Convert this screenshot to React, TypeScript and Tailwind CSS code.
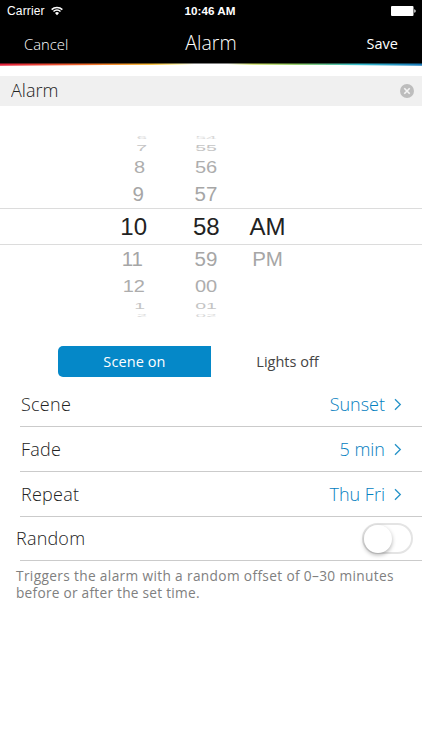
import { useState } from 'react';
import clsx from 'clsx';

interface WheelRow {
  hour: string;
  minute: string;
  period?: string;
  row: string;
  text: string;
  hourShift: string;
}

const wheelRows: WheelRow[] = [
  { hour: '6', minute: '54', row: 'h-[10px]', text: 'text-[19px] scale-y-[0.16] text-[#d8d8d8]', hourShift: 'pr-0' },
  { hour: '7', minute: '55', row: 'h-[11px]', text: 'text-[19.5px] scale-y-[0.47] text-[#c4c4c4]', hourShift: 'pr-0' },
  { hour: '8', minute: '56', row: 'h-[28px]', text: 'text-[20px] scale-y-[0.8] text-[#adadad]', hourShift: 'pr-[2px]' },
  { hour: '9', minute: '57', row: 'h-[27px]', text: 'text-[20.5px] text-[#a6a6a6]', hourShift: 'pr-[3px]' },
  { hour: '10', minute: '58', period: 'AM', row: 'h-[37px] border-y border-[#dcdcdc]', text: 'text-[24px] text-[#222]', hourShift: 'pr-0' },
  { hour: '11', minute: '59', period: 'PM', row: 'h-[28px]', text: 'text-[20.5px] text-[#a6a6a6]', hourShift: 'pr-[4px]' },
  { hour: '12', minute: '00', row: 'h-[26px]', text: 'text-[20px] scale-y-[0.8] text-[#adadad]', hourShift: 'pr-[2px]' },
  { hour: '1', minute: '01', row: 'h-[13px]', text: 'text-[19.5px] scale-y-[0.47] text-[#c4c4c4]', hourShift: 'pr-[2px]' },
  { hour: '2', minute: '02', row: 'h-[6px]', text: 'text-[19px] scale-y-[0.16] text-[#d8d8d8]', hourShift: 'pr-0' },
];

const settings = [
  { label: 'Scene', value: 'Sunset' },
  { label: 'Fade', value: '5 min' },
  { label: 'Repeat', value: 'Thu Fri' },
];

function StatusBar() {
  return (
    <div className="grid h-[22px] grid-cols-3 items-center pl-[7px] pr-[6px] font-['Liberation_Sans',sans-serif] text-[12px] text-white">
      <div className="flex items-center gap-[6px]">
        <span className="tracking-[0.15px]">Carrier</span>
        <svg width="12" height="10" viewBox="0 0 13 10" fill="none" stroke="white" strokeWidth="1.6">
          <path d="M.7 3.5a8.2 8.2 0 0 1 11.6 0M2.7 5.6a5.4 5.4 0 0 1 7.6 0" />
          <path d="M6.5 9.6 4.3 7.2a3.1 3.1 0 0 1 4.4 0z" fill="white" stroke="none" />
        </svg>
      </div>
      <span className="pr-[3px] text-center text-[11.7px] font-bold whitespace-nowrap">10:46 AM</span>
      <svg className="justify-self-end" width="25" height="10" viewBox="0 0 25 10" fill="white">
        <rect x="0" y="0" width="22.5" height="10" rx="1" />
        <path d="M23.3 3.2c1.8.3 1.8 3.3 0 3.6z" />
      </svg>
    </div>
  );
}

// colour strip that thins out towards the middle
function RainbowEdge() {
  return (
    <svg className="block" width="422" height="3" viewBox="0 0 422 3">
      <defs>
        <linearGradient id="rainbow">
          <stop offset="0" stopColor="#e3203c" />
          <stop offset="0.2" stopColor="#ee6a2c" />
          <stop offset="0.36" stopColor="#f8bc30" />
          <stop offset="0.42" stopColor="#fdf0a0" />
          <stop offset="0.46" stopColor="#ffffff" />
          <stop offset="0.54" stopColor="#ffffff" />
          <stop offset="0.6" stopColor="#cfe060" />
          <stop offset="0.7" stopColor="#8cc85a" />
          <stop offset="0.85" stopColor="#38bfd0" />
          <stop offset="1" stopColor="#1878b8" />
        </linearGradient>
      </defs>
      <rect width="422" height="3" fill="white" />
      <path d="M0 0H422V2.8Q211 0.6 0 2.8Z" fill="url(#rainbow)" />
      <rect width="422" height="0.5" fill="black" />
    </svg>
  );
}

function TimeWheel() {
  return (
    <div className="flex flex-col pt-[26px] font-['Liberation_Sans',sans-serif]">
      {wheelRows.map((item) => (
        <div key={item.hour} className={clsx('grid grid-cols-[147px_72px_1fr] content-center items-center', item.row)}>
          <span className={clsx('text-right leading-none', item.text, item.hourShift)}>{item.hour}</span>
          <div className="flex justify-end">
            <span className={clsx('w-[26px] text-center leading-none', item.text)}>{item.minute}</span>
          </div>
          <div className="flex pl-[30px]">
            {item.period && (
              <span className={clsx('w-[37px] text-center leading-none', item.text)}>{item.period}</span>
            )}
          </div>
        </div>
      ))}
    </div>
  );
}

function Chevron() {
  return (
    <svg width="8" height="13" viewBox="0 0 8 13" fill="none" stroke="#2593c8" strokeWidth="1.3">
      <path d="M1 1.2l5.3 5.3L1 11.8" />
    </svg>
  );
}

export default function App() {
  const [name, setName] = useState('Alarm');
  const [mode, setMode] = useState<'on' | 'off'>('on');
  const [random, setRandom] = useState(false);

  return (
    <div className="flex h-[750px] w-[422px] flex-col overflow-hidden bg-white font-['Open_Sans',sans-serif] text-[#222]">
      <header className="bg-black text-white">
        <StatusBar />
        <div className="grid h-[41px] grid-cols-3 items-center pb-px pl-6 pr-6">
          <button className="pt-[4px] text-left text-[14.8px] font-light">Cancel</button>
          <h1 className="pt-[2px] text-center text-[19.5px] font-light leading-none">Alarm</h1>
          <button className="pt-[4px] text-right text-[14.5px]">Save</button>
        </div>
        <RainbowEdge />
      </header>

      <div className="mt-[10px] flex h-[30px] items-center bg-[#f0f0f0] pl-[11px] pr-2">
        <input
          value={name}
          onChange={(e) => setName(e.target.value)}
          className="min-w-0 flex-1 bg-transparent pb-px text-[18px] font-light outline-none"
        />
        <button onClick={() => setName('')} aria-label="Clear">
          <svg width="14" height="14" viewBox="0 0 14 14">
            <circle cx="7" cy="7" r="7" fill="#bdbdbd" />
            <path d="M4.3 4.3l5.4 5.4M9.7 4.3L4.3 9.7" stroke="#f5f5f5" strokeWidth="1.6" />
          </svg>
        </button>
      </div>

      <TimeWheel />

      <div className="mx-[58px] mt-[28px] flex h-[31px] text-[14.5px] text-[#444]">
        <button
          onClick={() => setMode('on')}
          className={clsx('w-[153px] rounded-l-[5px] tracking-[0.1px]', mode === 'on' && 'bg-[#0588c8] text-white')}
        >
          Scene on
        </button>
        <button
          onClick={() => setMode('off')}
          className={clsx('w-[153px] rounded-r-[5px]', mode === 'off' && 'bg-[#0588c8] text-white')}
        >
          Lights off
        </button>
      </div>

      <div className="pt-[5px] text-[18px] font-light">
        {settings.map((item) => (
          <div key={item.label} className="ml-5 flex h-[45px] items-center border-b border-[#cbcbcb] pl-px pr-5">
            <span className="flex-1 tracking-[0.25px]">{item.label}</span>
            <span className="mr-[9px] text-[#0580c0]">{item.value}</span>
            <Chevron />
          </div>
        ))}
        <div className="flex h-[43px] items-center pl-4 pr-[9px]">
          <span className="flex-1 tracking-[0.2px]">Random</span>
          <button
            role="switch"
            aria-checked={random}
            aria-label="Random"
            onClick={() => setRandom(!random)}
            className={clsx(
              'flex h-[31px] w-[51px] items-center rounded-full border-2 border-[#e4e4e4]',
              random ? 'justify-end bg-[#0588c8]' : 'bg-white'
            )}
          >
            <span className="size-[28px] rounded-full bg-white shadow-[0_2px_4px_rgba(0,0,0,0.3)]" />
          </button>
        </div>
        <div className="ml-5 h-px bg-[#cbcbcb]" />
        <div className="flex flex-col pl-4 pt-[6px] text-[13.7px] font-normal leading-[17px] text-[#808080]">
          <p className="whitespace-nowrap tracking-[0.35px]">Triggers the alarm with a random offset of 0–30 minutes</p>
          <p className="whitespace-nowrap tracking-[0.25px]">before or after the set time.</p>
        </div>
      </div>
    </div>
  );
}
